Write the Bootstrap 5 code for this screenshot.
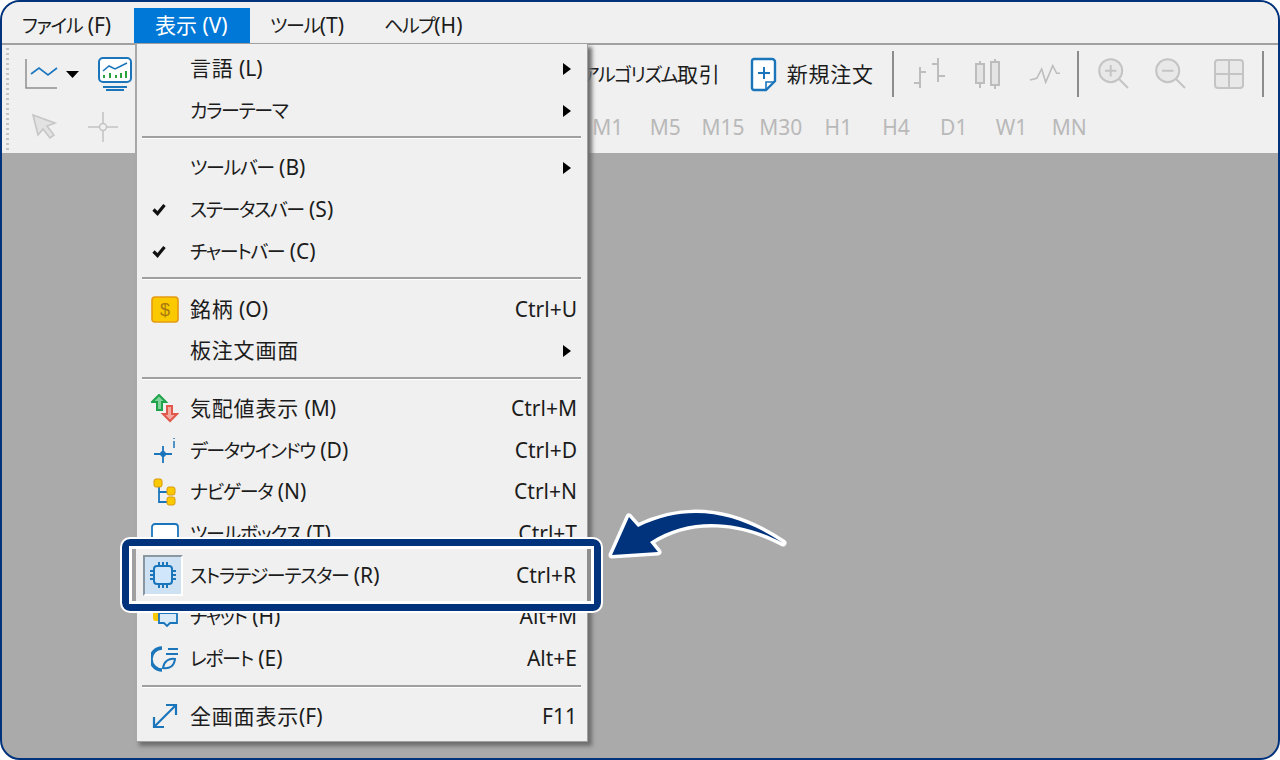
<!DOCTYPE html>
<html lang="ja"><head><meta charset="utf-8"><title>表示メニュー</title>
<link href="https://cdn.jsdelivr.net/npm/bootstrap@5.3.0/dist/css/bootstrap.min.css" rel="stylesheet">
<style>
html,body{margin:0;height:760px;overflow:hidden;background:#fff}
body{font-family:"Noto Sans","Noto Sans CJK JP",sans-serif;font-size:21px;font-feature-settings:"palt";color:#1c1c1c}
.kn{font-size:19px;letter-spacing:-1.400px}
.kj{letter-spacing:.8px}
.frame{width:1280px;height:760px;border:2px solid #00337c;border-radius:20px;background:#aaa;overflow:hidden;position:relative}
.menubar{height:41px;background:#f0f0f0}
.mb-item{height:35px;margin-top:6px;padding-left:20px;line-height:35px;white-space:nowrap;flex:none}
.w1{width:132px}.w2{width:116px;background:#0078d7;color:#fff;padding-left:21px}.w3{width:114px}
.tools{height:110px;background:#f0f0f0;border-top:2px solid #a0a0a0;padding:3px 0 0 4px}
.grip{width:3px;height:104px;background:repeating-linear-gradient(#c4c4c4 0 2px,transparent 2px 5px)}
.trow{height:52.500px}
.tbtn{width:57.700px;flex:none;display:flex;align-items:center;justify-content:center}
.tsep{width:2px;height:46px;background:#8c8c8c;flex:none}
.tf{color:#b9b9b9;padding-top:1px}
.dropmenu{position:absolute;left:133px;top:41px;width:453px;height:699px;background:#f0f0f0;border:1px solid #a0a0a0;border-left:2px solid #a8a8a8;box-shadow:4px 4px 4px #6e6e6e;padding-top:4px}
.mi{height:41.700px;display:flex;align-items:center;position:relative;white-space:nowrap}
.mi .ic{width:53px;flex:none;display:flex;align-items:center;justify-content:center;padding-left:2px}
.mi .lb{flex:1}
.mi .sc{padding-right:10px}
.tri{width:0;height:0;border-left:8px solid #000;border-top:6px solid transparent;border-bottom:6px solid transparent;margin-right:16px}
.sp{height:3px;background:#a0a0a0;border-bottom:1px solid #fff;margin:5px 6px 8px 5px}
.chk{margin-right:12px}
.focus{position:absolute;left:120px;top:537px;width:479px;height:72px;border:7px solid #00337c;border-radius:8px;outline:2.500px solid #fff;background:#f0f0f0}
.focus-in{position:absolute;inset:3px;display:flex;align-items:center;border-left:4px solid #a0a0a0;border-right:4px solid #8e8e8e;background:#f0f0f0;white-space:nowrap;box-shadow:0 0 0 3px #fff}
.chip{width:40px;height:41px;margin-left:7px;background:#cfe2f3;border:2px solid #8a96a0;border-right-color:#fff;border-bottom-color:#fff;display:flex;align-items:center;justify-content:center;flex:none}
.ftxt{padding-top:2px}
.arrow{position:absolute;left:606px;top:506px}
.arrow path{paint-order:stroke}
</style></head><body>
<div class="frame">
 <div class="menubar d-flex">
  <div class="mb-item w1"><span class="kn">ファイル</span> (F)</div>
  <div class="mb-item w2">表示 (V)</div>
  <div class="mb-item w3"><span class="kn">ツール</span>(T)</div>
  <div class="mb-item"><span class="kn">ヘルプ</span>(H)</div>
 </div>
 <div class="tools d-flex">
  <div class="grip"></div>
  <div class="flex-grow-1">
   <div class="trow d-flex align-items-center">
    <svg class="ms-3" width="60" height="36" viewBox="0 0 60 36"><path d="M1 3V32H32" fill="none" stroke="#8f8f8f" stroke-width="1.5"/><path d="M6 18l8-6 9 7 9-7" fill="none" stroke="#1e78c0" stroke-width="1.7"/><path d="M41 15h13l-6.500 7z" fill="#000"/></svg>
    <svg style="margin-left:12px" width="36" height="36" viewBox="0 0 36 36"><rect x="2" y="2" width="32" height="24" rx="4" fill="#fff" stroke="#1b75bb" stroke-width="2"/><path d="M6 31h24M9 34h18" stroke="#1b75bb" stroke-width="2"/><path d="M6 15l6-5 6 3 6-3 6-3" fill="none" stroke="#1b75bb" stroke-width="1.500"/><path d="M7 22v-3M13 22v-5M19 22v-3M24 22v-5M29 22v-7" stroke="#2aa13a" stroke-width="2"/></svg>
    <span class="ms-auto d-flex align-items-center">
     <span><span class="kn">アルゴリズム</span><span class="kj">取引</span></span>
     <svg style="margin:0 9px 0 29px" width="28" height="36" viewBox="0 0 28 36"><path d="M4 3h18a3 3 0 0 1 3 3v19l-9 9H4a2 2 0 0 1-2-2V5a2 2 0 0 1 2-2z" fill="#fff" stroke="#1b75bb" stroke-width="2.400"/><path d="M8 17h12M14 11v12" stroke="#1b75bb" stroke-width="2"/><path d="M16 34v-8h9" fill="none" stroke="#1b75bb" stroke-width="1.600"/></svg>
     <span class="kj">新規注文</span>
     <span class="tsep" style="margin:0 7px 0 18px"></span>
    </span>
    <span class="tbtn"><svg width="32" height="32" viewBox="0 0 32 32" fill="none" stroke="#bdbdbd" stroke-width="2"><path d="M6 9v21M0 25h6M6 14h6M24 0v24M18 6h6M24 18h7"/></svg></span>
    <span class="tbtn"><svg width="32" height="32" viewBox="0 0 32 32" fill="#e4e4e4" stroke="#bdbdbd" stroke-width="2"><path d="M9 3v27M24 1v30"/><rect x="5" y="6" width="8" height="19"/><rect x="20" y="4" width="8" height="23"/></svg></span>
    <span class="tbtn"><svg width="32" height="20" viewBox="0 0 32 20" fill="none" stroke="#bdbdbd" stroke-width="1.600"><path d="M1 16l6.700-1.700L12.700 5l4 13.300L23.700 1.700l4 7.600H31"/></svg></span>
    <span class="tsep" style="margin:0 6px 0 3px"></span>
    <span class="tbtn"><svg width="34" height="34" viewBox="0 0 34 34" fill="none" stroke="#c4c4c4" stroke-width="2"><circle cx="13.700" cy="13.700" r="11.500" fill="#e8e8e8"/><path d="M8 13.700h11.500M13.700 8v11.500M22 22l9 9"/></svg></span>
    <span class="tbtn"><svg width="34" height="34" viewBox="0 0 34 34" fill="none" stroke="#c4c4c4" stroke-width="2"><circle cx="13.700" cy="13.700" r="11.500" fill="#e8e8e8"/><path d="M8 13.700h11.500M22 22l9 9"/></svg></span>
    <span class="tbtn"><svg width="32" height="32" viewBox="0 0 32 32" fill="#e8e8e8" stroke="#c4c4c4" stroke-width="2"><rect x="2" y="2" width="28" height="28" rx="3"/><path d="M16 2v28M2 16h28"/></svg></span>
    <span class="tsep" style="margin:0 14px 0 4px"></span>
   </div>
   <div class="trow d-flex align-items-center tf">
    <svg class="position-absolute" style="left:28px;top:109px" width="90" height="32" viewBox="0 0 90 32"><path d="M3 4l22 8-8 3 7 9-4 3-7-9-5 6z" fill="#e2e2e2" stroke="#c6c6c6" stroke-width="1.600"/><path d="M73 1v30M58 16h30" stroke="#c2c2c2" stroke-width="1.500"/><circle cx="73" cy="16" r="3.500" fill="#f0f0f0" stroke="#c2c2c2" stroke-width="1.400"/></svg>
    <span class="ms-auto"></span>
    <span class="tbtn">M1</span><span class="tbtn">M5</span><span class="tbtn">M15</span><span class="tbtn">M30</span><span class="tbtn">H1</span><span class="tbtn">H4</span><span class="tbtn">D1</span><span class="tbtn">W1</span><span class="tbtn">MN</span>
    <span style="width:180px;flex:none"></span>
   </div>
  </div>
 </div>

 <div class="dropmenu">
  <div class="mi"><span class="ic"></span><span class="lb"><span class="kj">言語</span> (L)</span><span class="tri"></span></div>
  <div class="mi"><span class="ic"></span><span class="lb"><span class="kn">カラーテーマ</span></span><span class="tri"></span></div>
  <div class="sp"></div>
  <div class="mi"><span class="ic"></span><span class="lb"><span class="kn">ツールバー</span> (B)</span><span class="tri"></span></div>
  <div class="mi"><span class="ic"><svg class="chk" width="14" height="13" viewBox="0 0 14 13"><path d="M1.500 6.500l4 4 7-8.500" fill="none" stroke="#111" stroke-width="3.200"/></svg></span><span class="lb"><span class="kn">ステータスバー</span> (S)</span></div>
  <div class="mi"><span class="ic"><svg class="chk" width="14" height="13" viewBox="0 0 14 13"><path d="M1.500 6.500l4 4 7-8.500" fill="none" stroke="#111" stroke-width="3.200"/></svg></span><span class="lb"><span class="kn">チャートバー</span> (C)</span></div>
  <div class="sp"></div>
  <div class="mi"><span class="ic"><svg width="28" height="28" viewBox="0 0 28 28"><rect x="1" y="2" width="26" height="25" rx="3" fill="#fbc900" stroke="#e59a10" stroke-width="1.600"/><text x="14" y="21" text-anchor="middle" font-size="18" font-family="Liberation Sans" fill="#a87a10">$</text></svg></span><span class="lb"><span class="kj">銘柄</span> (O)</span><span class="sc">Ctrl+U</span></div>
  <div class="mi"><span class="ic"></span><span class="lb kj">板注文画面</span><span class="tri"></span></div>
  <div class="sp"></div>
  <div class="mi"><span class="ic"><svg width="28" height="30" viewBox="0 0 28 30"><path d="M8 1l7 7h-4v8H6V8H1z" fill="#7fd39a" stroke="#1fa34a" stroke-width="2"/><path d="M19 27l-7-7h4v-8h5v8h5z" fill="#f3a8a0" stroke="#e2574c" stroke-width="2"/></svg></span><span class="lb"><span class="kj">気配値表示</span> (M)</span><span class="sc">Ctrl+M</span></div>
  <div class="mi"><span class="ic"><svg width="24" height="28" viewBox="0 0 24 28" fill="none" stroke="#1b75bb" stroke-width="1.800"><path d="M1 18h18M10 10v17"/><circle cx="10" cy="18" r="2" fill="#1b75bb"/><path d="M21 2v1M21 5v7" stroke-width="1.500"/></svg></span><span class="lb"><span class="kn">データウインドウ</span> (D)</span><span class="sc">Ctrl+D</span></div>
  <div class="mi"><span class="ic"><svg width="24" height="28" viewBox="0 0 24 28"><path d="M6 6v18h8M6 14h8" fill="none" stroke="#1b75bb" stroke-width="1.800"/><rect x="1" y="1" width="8" height="8" rx="2" fill="#fbc900" stroke="#d89a10"/><rect x="14" y="9" width="8" height="8" rx="2" fill="#fbc900" stroke="#d89a10"/><rect x="14" y="19" width="8" height="8" rx="2" fill="#fbc900" stroke="#d89a10"/></svg></span><span class="lb"><span class="kn">ナビゲータ</span> (N)</span><span class="sc">Ctrl+N</span></div>
  <div class="mi"><span class="ic"><svg width="28" height="22" viewBox="0 0 28 22"><rect x="1" y="1" width="26" height="20" rx="3" fill="#fff" stroke="#1b75bb" stroke-width="1.800"/></svg></span><span class="lb"><span class="kn">ツールボックス</span> (T)</span><span class="sc">Ctrl+T</span></div>
  <div class="mi"><span class="ic"></span><span class="lb"></span></div>
  <div class="mi"><span class="ic"><svg width="28" height="22" viewBox="0 0 28 22"><path d="M2 1h10v14H5a3 3 0 0 1-3-3z" fill="#fbc900"/><path d="M8 7h18v10h-7l-3 3-3-3H8z" fill="#dbeaf7" stroke="#1b75bb" stroke-width="1.800"/></svg></span><span class="lb"><span class="kn">チャット</span> (H)</span><span class="sc">Alt+M</span></div>
  <div class="mi"><span class="ic"><svg width="28" height="26" viewBox="0 0 28 26" fill="none" stroke="#1b75bb"><path d="M11 2A11 11 0 0 0 11 24" stroke-width="3.500"/><path d="M17 3h10M15 8h12" stroke-width="2"/><path d="M12 22c1-7 6-10 12-9-1 7-5 10-12 9z" stroke-width="2"/></svg></span><span class="lb"><span class="kn">レポート</span> (E)</span><span class="sc">Alt+E</span></div>
  <div class="sp"></div>
  <div class="mi"><span class="ic"><svg width="26" height="26" viewBox="0 0 26 26" fill="none" stroke="#1b75bb" stroke-width="2.200"><path d="M3 23L23 3M14 2h10v10M2 14v10h10"/></svg></span><span class="lb"><span class="kj">全画面表示</span>(F)</span><span class="sc">F11</span></div>
 </div>

 <div class="focus"><div class="focus-in">
  <span class="chip"><svg width="28" height="28" viewBox="0 0 28 28" fill="none" stroke="#1b75bb" stroke-width="2"><rect x="5" y="5" width="18" height="18" rx="3" fill="#cfe6fb"/><path d="M10 1v4M14 1v4M18 1v4M10 23v4M14 23v4M18 23v4M1 10h4M1 14h4M1 18h4M23 10h4M23 14h4M23 18h4"/></svg></span>
  <span class="flex-grow-1 ftxt" style="padding-left:7px"><span class="kn">ストラテジーテスター</span> (R)</span>
  <span class="ftxt" style="padding-right:11px">Ctrl+R</span>
 </div></div>

 <svg class="arrow" width="190" height="60" viewBox="0 0 190 60"><path d="M4 47L21 9 30 19C85 -8 135 8 175 35 135 14 85 6 42 34L50 44z" fill="#00337c" stroke="#fff" stroke-width="7" stroke-linejoin="round"/></svg>
</div>
</body></html>
